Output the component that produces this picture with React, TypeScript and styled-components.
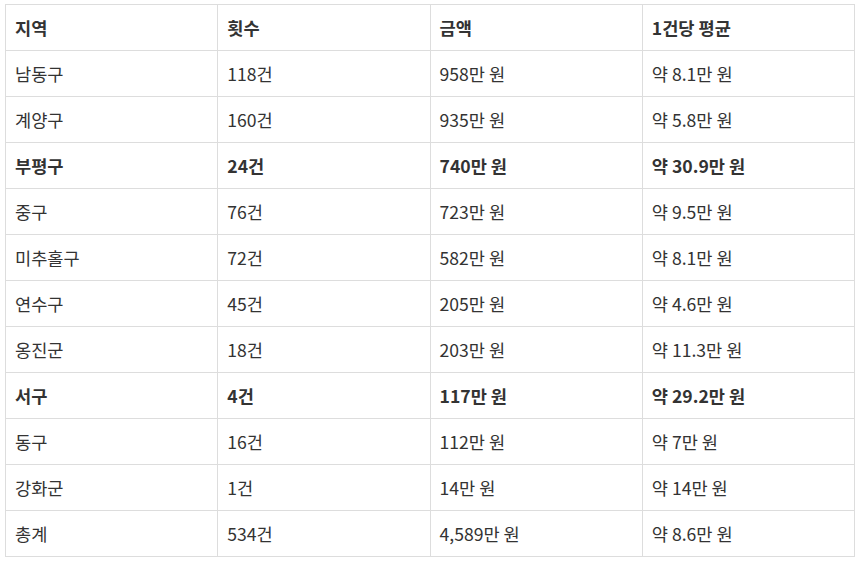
import styled, { createGlobalStyle } from "styled-components"

const GlobalStyle = createGlobalStyle`
    body {
        margin: 0;
        background: #ffffff;
        font-family: "Noto Sans CJK KR", "Noto Sans", sans-serif;
    }
`

const Wrapper = styled.div`
    padding: 4px 5px;
`

const Table = styled.table`
    width: 850px;
    border-collapse: collapse;
    table-layout: fixed;
    color: #333333;
    font-size: 17.6px;
`

interface CellProps {
    $bold?: boolean
}

const Cell = styled.td<CellProps>`
    height: 45px;
    padding: 0 9px;
    border: 1px solid #dddddd;
    text-align: left;
    vertical-align: middle;
    font-weight: ${props => (props.$bold ? 700 : 400)};
    white-space: nowrap;
`

const HeadCell = styled(Cell).attrs({ as: "th" })`
    font-weight: 700;
`

const rows = [
    ["남동구", "118건", "958만 원", "약 8.1만 원"],
    ["계양구", "160건", "935만 원", "약 5.8만 원"],
    ["부평구", "24건", "740만 원", "약 30.9만 원", true],
    ["중구", "76건", "723만 원", "약 9.5만 원"],
    ["미추홀구", "72건", "582만 원", "약 8.1만 원"],
    ["연수구", "45건", "205만 원", "약 4.6만 원"],
    ["옹진군", "18건", "203만 원", "약 11.3만 원"],
    ["서구", "4건", "117만 원", "약 29.2만 원", true],
    ["동구", "16건", "112만 원", "약 7만 원"],
    ["강화군", "1건", "14만 원", "약 14만 원"],
    ["총계", "534건", "4,589만 원", "약 8.6만 원"],
] as const

export default function App() {
    return (
        <Wrapper>
            <GlobalStyle />
            <Table>
                <thead>
                    <tr>
                        <HeadCell>지역</HeadCell>
                        <HeadCell>횟수</HeadCell>
                        <HeadCell>금액</HeadCell>
                        <HeadCell>1건당 평균</HeadCell>
                    </tr>
                </thead>
                <tbody>
                    {rows.map(row => (
                        <tr key={row[0]}>
                            {row.slice(0, 4).map((v, i) => (
                                <Cell key={i} $bold={row[4] === true}>
                                    {v}
                                </Cell>
                            ))}
                        </tr>
                    ))}
                </tbody>
            </Table>
        </Wrapper>
    )
}
